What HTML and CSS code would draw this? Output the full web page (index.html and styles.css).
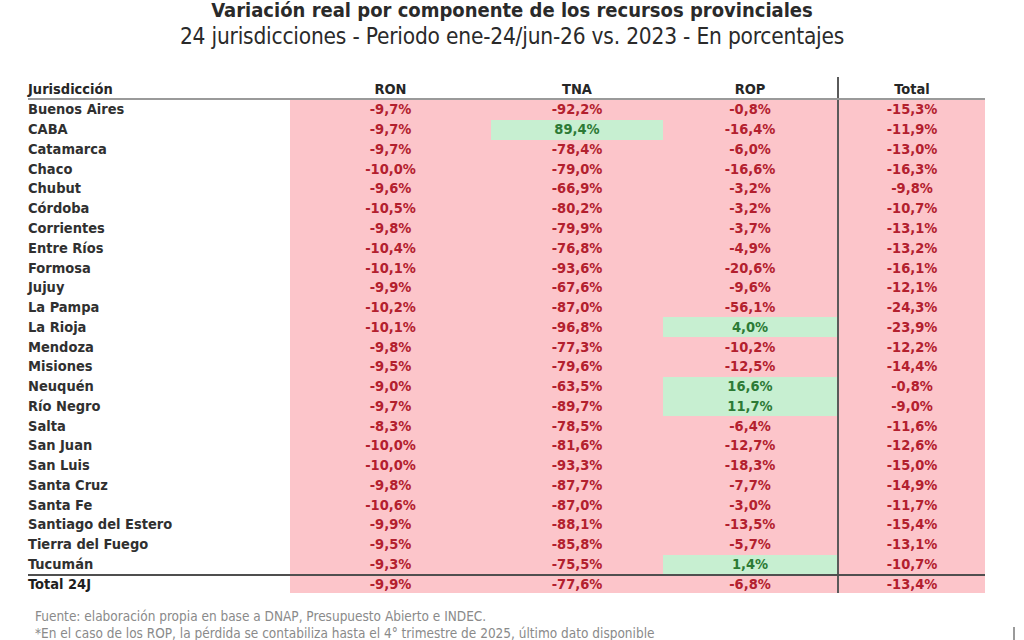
FILE: index.html
```html
<!DOCTYPE html>
<html lang="es">
<head>
<meta charset="utf-8">
<title>Variación real por componente de los recursos provinciales</title>
<link rel="stylesheet" href="styles.css">
</head>
<body>
<header class="titles">
  <h1 class="t1">Variación real por componente de los recursos provinciales</h1>
  <h2 class="t2">24 jurisdicciones - Periodo ene-24/jun-26 vs. 2023 - En porcentajes</h2>
</header>
<table class="tbl">
  <colgroup>
    <col class="c-name"><col class="c-ron"><col class="c-tna"><col class="c-rop"><col class="c-tot">
  </colgroup>
  <thead>
    <tr><th class="name">Jurisdicción</th><th>RON</th><th>TNA</th><th class="rop">ROP</th><th>Total</th></tr>
  </thead>
  <tbody>
    <tr><td class="name">Buenos Aires</td><td>-9,7%</td><td>-92,2%</td><td class="rop">-0,8%</td><td>-15,3%</td></tr>
    <tr><td class="name">CABA</td><td>-9,7%</td><td class="pos">89,4%</td><td class="rop">-16,4%</td><td>-11,9%</td></tr>
    <tr><td class="name">Catamarca</td><td>-9,7%</td><td>-78,4%</td><td class="rop">-6,0%</td><td>-13,0%</td></tr>
    <tr><td class="name">Chaco</td><td>-10,0%</td><td>-79,0%</td><td class="rop">-16,6%</td><td>-16,3%</td></tr>
    <tr><td class="name">Chubut</td><td>-9,6%</td><td>-66,9%</td><td class="rop">-3,2%</td><td>-9,8%</td></tr>
    <tr><td class="name">Córdoba</td><td>-10,5%</td><td>-80,2%</td><td class="rop">-3,2%</td><td>-10,7%</td></tr>
    <tr><td class="name">Corrientes</td><td>-9,8%</td><td>-79,9%</td><td class="rop">-3,7%</td><td>-13,1%</td></tr>
    <tr><td class="name">Entre Ríos</td><td>-10,4%</td><td>-76,8%</td><td class="rop">-4,9%</td><td>-13,2%</td></tr>
    <tr><td class="name">Formosa</td><td>-10,1%</td><td>-93,6%</td><td class="rop">-20,6%</td><td>-16,1%</td></tr>
    <tr><td class="name">Jujuy</td><td>-9,9%</td><td>-67,6%</td><td class="rop">-9,6%</td><td>-12,1%</td></tr>
    <tr><td class="name">La Pampa</td><td>-10,2%</td><td>-87,0%</td><td class="rop">-56,1%</td><td>-24,3%</td></tr>
    <tr><td class="name">La Rioja</td><td>-10,1%</td><td>-96,8%</td><td class="rop pos">4,0%</td><td>-23,9%</td></tr>
    <tr><td class="name">Mendoza</td><td>-9,8%</td><td>-77,3%</td><td class="rop">-10,2%</td><td>-12,2%</td></tr>
    <tr><td class="name">Misiones</td><td>-9,5%</td><td>-79,6%</td><td class="rop">-12,5%</td><td>-14,4%</td></tr>
    <tr><td class="name">Neuquén</td><td>-9,0%</td><td>-63,5%</td><td class="rop pos">16,6%</td><td>-0,8%</td></tr>
    <tr><td class="name">Río Negro</td><td>-9,7%</td><td>-89,7%</td><td class="rop pos">11,7%</td><td>-9,0%</td></tr>
    <tr><td class="name">Salta</td><td>-8,3%</td><td>-78,5%</td><td class="rop">-6,4%</td><td>-11,6%</td></tr>
    <tr><td class="name">San Juan</td><td>-10,0%</td><td>-81,6%</td><td class="rop">-12,7%</td><td>-12,6%</td></tr>
    <tr><td class="name">San Luis</td><td>-10,0%</td><td>-93,3%</td><td class="rop">-18,3%</td><td>-15,0%</td></tr>
    <tr><td class="name">Santa Cruz</td><td>-9,8%</td><td>-87,7%</td><td class="rop">-7,7%</td><td>-14,9%</td></tr>
    <tr><td class="name">Santa Fe</td><td>-10,6%</td><td>-87,0%</td><td class="rop">-3,0%</td><td>-11,7%</td></tr>
    <tr><td class="name">Santiago del Estero</td><td>-9,9%</td><td>-88,1%</td><td class="rop">-13,5%</td><td>-15,4%</td></tr>
    <tr><td class="name">Tierra del Fuego</td><td>-9,5%</td><td>-85,8%</td><td class="rop">-5,7%</td><td>-13,1%</td></tr>
    <tr><td class="name">Tucumán</td><td>-9,3%</td><td>-75,5%</td><td class="rop pos">1,4%</td><td>-10,7%</td></tr>
  </tbody>
  <tfoot>
    <tr><td class="name">Total 24J</td><td>-9,9%</td><td>-77,6%</td><td class="rop">-6,8%</td><td>-13,4%</td></tr>
  </tfoot>
</table>
<footer class="notes">
  <p>Fuente: elaboración propia en base a DNAP, Presupuesto Abierto e INDEC.</p>
  <p>*En el caso de los ROP, la pérdida se contabiliza hasta el 4° trimestre de 2025, último dato disponible</p>
  <span class="tick"></span>
</footer>
</body>
</html>
```
FILE: styles.css
```css
html, body {
  margin: 0;
  padding: 0;
  background: #ffffff;
}
body {
  width: 1024px;
  height: 640px;
  overflow: hidden;
  font-family: "DejaVu Sans Condensed", "DejaVu Sans", sans-serif;
  color: #2b2b2b;
  position: relative;
}
.titles {
  text-align: center;
}
.t1 {
  margin: 0;
  font-size: 20px;
  line-height: 20px;
  font-weight: bold;
  color: #2a2a2a;
  letter-spacing: 0;
}
.t2 {
  margin: 4px 0 0 0;
  font-size: 22.5px;
  line-height: 24px;
  font-weight: normal;
  color: #2a2a2a;
  letter-spacing: -0.2px;
}
.tbl {
  margin: 29px 0 0 28px;
  width: 957px;
  border-collapse: collapse;
  table-layout: fixed;
  font-size: 14.5px;
}
.c-name { width: 262px; }
.c-ron { width: 201px; }
.c-tna { width: 172px; }
.c-rop { width: 175px; }
.c-tot { width: 147px; }
.tbl th {
  height: 20px;
  padding: 0 0 1px 0;
  font-weight: bold;
  text-align: center;
  color: #262626;
  border-bottom: 2px solid #9a9a9a;
  vertical-align: bottom;
  line-height: 16px;
}
.tbl th.name { text-align: left; }
.tbl td {
  height: 19.78px;
  padding: 0;
  text-align: center;
  line-height: 19px;
  color: #b3202e;
  background: #fcc5ca;
  font-weight: 600;
}
.tbl td.name {
  background: #ffffff;
  text-align: left;
  color: #303030;
}
.tbl .rop {
  border-right: 2px solid #5a5a5a;
}
.tbl td.pos {
  background: #c7efd1;
  color: #2c7a35;
}
.tbl tbody tr:last-child td {
  border-bottom: 2px solid #4f4f4f;
}
.tbl tfoot td {
  font-weight: bold;
  height: 17px;
  line-height: 17px;
}
.tbl tfoot td.name { color: #1e1e1e; }
.notes {
  margin: 15px 0 0 35px;
  font-family: "Liberation Sans Narrow", "DejaVu Sans Condensed", sans-serif;
  font-size: 13.5px;
  line-height: 17px;
  color: #8a8a8a;
}
.notes p { margin: 0; }
.tick {
  position: absolute;
  left: 1013px;
  top: 627px;
  width: 2px;
  height: 13px;
  background: #9a9a9a;
}
```
